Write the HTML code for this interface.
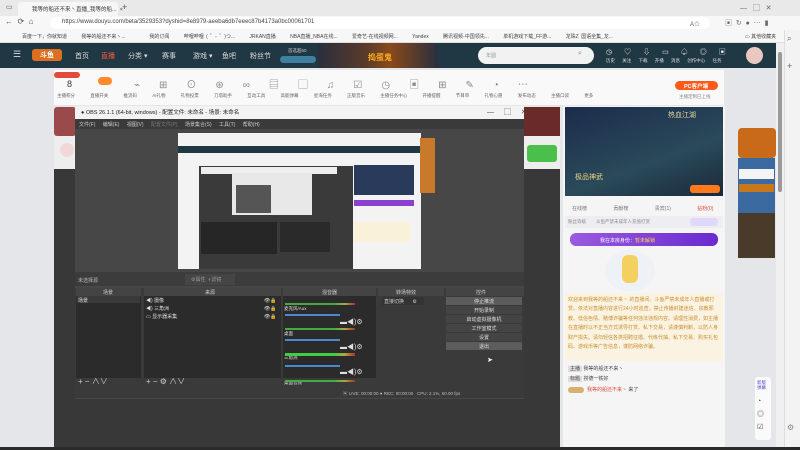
<!DOCTYPE html>
<html><head><meta charset="utf-8"><style>
*{margin:0;padding:0;box-sizing:border-box}
body{width:800px;height:450px;overflow:hidden;background:#e5e6ea;font-family:"Liberation Sans","Noto Sans CJK SC",sans-serif;font-size:6px;color:#333;position:relative}
.a{position:absolute}
.t{white-space:nowrap}
</style></head><body>
<!-- tab bar -->
<div class="a" style="left:0;top:0;width:800px;height:16px;background:#e9e9e9"></div>
<div class="a" style="left:18px;top:2px;width:100px;height:14px;background:#f7f7f7;border-radius:4px 4px 0 0"></div>
<div class="a t" style="left:32px;top:5px;font-size:5.5px">我等的船还不来丶直播_我等的船...&nbsp;&nbsp;×</div>
<div class="a t" style="left:122px;top:2px;font-size:9px;color:#555">+</div>
<div class="a t" style="left:6px;top:3px;font-size:7px;color:#555">▭</div>
<div class="a t" style="left:740px;top:3px;font-size:7px;color:#666">—&nbsp;&nbsp;&nbsp;▢&nbsp;&nbsp;&nbsp;✕</div>
<!-- address bar -->
<div class="a" style="left:0;top:16px;width:800px;height:14px;background:#f7f7f7"></div>
<div class="a t" style="left:5px;top:17px;font-size:8px;color:#555">←&nbsp;&nbsp;⟳&nbsp;&nbsp;⌂</div>
<div class="a" style="left:50px;top:17px;width:660px;height:12px;background:#fff;border-radius:6px"></div>
<div class="a t" style="left:62px;top:19px;font-size:6px;color:#444">https://www.douyu.com/beta/3529353?dyshid=8e8979-aeeba6db7eeec87b4173a0bc00061701</div>
<div class="a t" style="left:690px;top:19px;font-size:6px;color:#666">A☆</div>
<div class="a t" style="left:725px;top:18px;font-size:7px;color:#666">▣&nbsp;&nbsp;↻&nbsp;&nbsp;●&nbsp;&nbsp;⋯&nbsp;&nbsp;▮</div>
<!-- bookmarks -->
<div class="a" style="left:0;top:30px;width:800px;height:13px;background:#f7f7f7;border-bottom:1px solid #ddd"></div>
<div class="a t" style="left:22px;top:33px;font-size:5px;color:#444;word-spacing:1px">百度一下，你就知道&nbsp;&nbsp;&nbsp;&nbsp;&nbsp;&nbsp;我等的船还不来丶...&nbsp;&nbsp;&nbsp;&nbsp;&nbsp;&nbsp;&nbsp;&nbsp;&nbsp;&nbsp;我的订阅&nbsp;&nbsp;&nbsp;&nbsp;&nbsp;&nbsp;哔哩哔哩 ( ゜- ゜)つ...&nbsp;&nbsp;&nbsp;&nbsp;&nbsp;&nbsp;JRKAN直播&nbsp;&nbsp;&nbsp;&nbsp;&nbsp;&nbsp;NBA直播_NBA在线...&nbsp;&nbsp;&nbsp;&nbsp;&nbsp;&nbsp;爱奇艺-在线视频网...&nbsp;&nbsp;&nbsp;&nbsp;&nbsp;&nbsp;Yandex&nbsp;&nbsp;&nbsp;&nbsp;&nbsp;&nbsp;腾讯视频-中国领先...&nbsp;&nbsp;&nbsp;&nbsp;&nbsp;&nbsp;单机游戏下载_FF游...&nbsp;&nbsp;&nbsp;&nbsp;&nbsp;&nbsp;龙珠Z 国语全集_龙...</div>
<div class="a t" style="left:745px;top:33px;font-size:5px;color:#444">▭ 其他收藏夹</div>
<!-- right browser sidebar -->
<div class="a" style="left:784px;top:30px;width:16px;height:418px;background:#f3f3f3;border-left:1px solid #ddd"></div>
<div class="a t" style="left:787px;top:34px;font-size:8px;color:#666">⌕</div>
<div class="a t" style="left:787px;top:61px;font-size:9px;color:#666">+</div>
<div class="a t" style="left:787px;top:423px;font-size:8px;color:#888">⚙</div>
<!-- scrollbar -->
<div class="a" style="left:776px;top:43px;width:8px;height:405px;background:#f0f0f0"></div>
<div class="a" style="left:778px;top:52px;width:4px;height:140px;background:#9a9a9a;border-radius:2px"></div>
<!-- douyu header -->
<div class="a" style="left:0;top:43px;width:776px;height:25px;background:#203844"></div>
<div class="a t" style="left:13px;top:49px;font-size:9px;color:#ddd">☰</div>
<div class="a" style="left:32px;top:49px;width:30px;height:12px;background:#ff7a1a;border-radius:3px;opacity:.85"></div>
<div class="a t" style="left:40px;top:50px;font-size:7px;color:#fff;font-weight:bold">斗鱼</div>
<div class="a t" style="left:75px;top:51px;font-size:7px;color:#ddd">首页</div>
<div class="a t" style="left:101px;top:51px;font-size:7px;color:#ff5a3c">直播</div>
<div class="a t" style="left:128px;top:51px;font-size:7px;color:#ddd">分类 ▾</div>
<div class="a t" style="left:162px;top:51px;font-size:7px;color:#ddd">赛事</div>
<div class="a t" style="left:193px;top:51px;font-size:7px;color:#ddd">游戏 ▾</div>
<div class="a t" style="left:222px;top:51px;font-size:7px;color:#ddd">鱼吧</div>
<div class="a t" style="left:250px;top:51px;font-size:7px;color:#ddd">粉丝节</div>
<div class="a t" style="left:288px;top:48px;font-size:4.5px;color:#ccc">首选超60</div>
<div class="a" style="left:280px;top:56px;width:36px;height:7px;background:#3f7fa0;border-radius:4px"></div>
<div class="a" style="left:318px;top:43px;width:120px;height:25px;background:linear-gradient(90deg,#2a2f3e,#5a3a2a 40%,#8a4a1a 60%,#2a2f3e)"></div>
<div class="a t" style="left:368px;top:52px;font-size:8px;color:#ffb020;font-weight:bold">捣蛋鬼</div>
<div class="a" style="left:478px;top:47px;width:116px;height:17px;background:#f2f2f2;border-radius:9px"></div>
<div class="a t" style="left:486px;top:52px;font-size:5px;color:#999">年圆</div>
<div class="a t" style="left:578px;top:50px;font-size:7px;color:#888">⌕</div>
<div class="a t" style="left:606px;top:47px;font-size:7px;color:#eee;letter-spacing:12px">◷♡⇩▭♤◎▣</div>
<div class="a t" style="left:606px;top:58px;font-size:4.5px;color:#ddd;word-spacing:6px">历史 关注 下载 开播 消息 创作中心 任务</div>
<div class="a" style="left:746px;top:47px;width:17px;height:17px;background:#e8c8c0;border-radius:50%"></div>
<!-- toolbar -->
<div class="a" style="left:54px;top:70px;width:670px;height:35px;background:#f9f9f9"></div>
<div class="a" style="left:54px;top:72px;width:26px;height:6px;background:#e24a3a;border-radius:3px"></div>
<div class="a t" style="left:67px;top:79px;font-size:9px;color:#333">8</div>
<div class="a" style="left:98px;top:77px;width:14px;height:8px;background:#ff8a2a;border-radius:4px"></div>
<div class="a t" style="left:57px;top:93px;font-size:4.5px;color:#666;word-spacing:14px">主播积分 直播开关 推流码 AI礼物 礼物投票 刀塔助手 互动工具 高能弹幕 星海任务 正版音乐 主播任务中心 开播提醒 节目单 礼物心愿 发布动态 主播口袋 更多</div>
<div class="a t" style="left:134px;top:76px;font-size:10px;color:#888;letter-spacing:19px">⌁⊞⊙⊛∞▤▢♫☑◷▣⊞✎◔⋯</div>
<div class="a" style="left:675px;top:81px;width:43px;height:9px;background:#ff5a1a;border-radius:5px"></div>
<div class="a t" style="left:684px;top:82px;font-size:5.5px;color:#fff;font-weight:bold">PC客户端</div>
<div class="a t" style="left:679px;top:94px;font-size:4.5px;color:#888">主播定制已上线</div>
<!-- main dark video area -->
<div class="a" style="left:54px;top:107px;width:506px;height:340px;background:#383838"></div>
<div class="a" style="left:54px;top:107px;width:506px;height:62px;background:#eee"></div>
<div class="a" style="left:54px;top:107px;width:22px;height:29px;background:#9a4a4a;border-radius:3px"></div>
<div class="a" style="left:60px;top:143px;width:14px;height:14px;background:#f0d8d8;border-radius:50%"></div>
<div class="a" style="left:524px;top:107px;width:36px;height:29px;background:#6a2a2a"></div>
<div class="a" style="left:527px;top:145px;width:30px;height:17px;background:#4ac04a;border-radius:3px"></div>
<!-- OBS window -->
<div class="a" style="left:75px;top:106px;width:449px;height:293px;background:#474747"></div>
<div class="a" style="left:75px;top:106px;width:449px;height:13px;background:#f3f3f3"></div>
<div class="a t" style="left:81px;top:108px;font-size:5.5px;color:#222">● OBS 26.1.1 (64-bit, windows) - 配置文件: 未命名 - 场景: 未命名</div>
<div class="a t" style="left:487px;top:107px;font-size:7px;color:#444;word-spacing:8px">— ▢ ✕</div>
<div class="a" style="left:75px;top:119px;width:449px;height:10px;background:#3a3a3a"></div>
<div class="a t" style="left:79px;top:121px;font-size:5px;color:#ccc;word-spacing:6px">文件(F) 编辑(E) 视图(V) <span style="color:#777">配置文件(P)</span> 场景集合(S) 工具(T) 帮助(H)</div>
<!-- preview -->
<div class="a" style="left:178px;top:133px;width:243px;height:136px;background:#f3f3f3"></div>
<div class="a" style="left:178px;top:146px;width:243px;height:7px;background:#203844"></div>
<div class="a" style="left:199px;top:166px;width:154px;height:103px;background:#3a3a3a"></div>
<div class="a" style="left:201px;top:167px;width:136px;height:7px;background:#eee"></div>
<div class="a" style="left:232px;top:173px;width:80px;height:42px;background:#e8e8e8"></div>
<div class="a" style="left:236px;top:185px;width:35px;height:28px;background:#555"></div>
<div class="a" style="left:201px;top:222px;width:76px;height:32px;background:#262626"></div>
<div class="a" style="left:280px;top:222px;width:50px;height:30px;background:#2a2a2a"></div>
<div class="a" style="left:354px;top:165px;width:60px;height:30px;background:#2a3a5a"></div>
<div class="a" style="left:354px;top:200px;width:60px;height:6px;background:#8a40d0"></div>
<div class="a" style="left:354px;top:222px;width:56px;height:20px;background:#f9f1d8"></div>
<div class="a" style="left:420px;top:138px;width:15px;height:55px;background:#c87a2a"></div>
<!-- sources toolbar -->
<div class="a" style="left:75px;top:272px;width:449px;height:14px;background:#3c3c3c"></div>
<div class="a t" style="left:78px;top:277px;font-size:5px;color:#bbb">未选择源</div>
<div class="a" style="left:185px;top:274px;width:50px;height:11px;background:#454545"></div>
<div class="a t" style="left:191px;top:276px;font-size:5px;color:#999">⚙属性&nbsp;&nbsp;◐滤镜</div>
<!-- docks -->
<div class="a" style="left:75px;top:288px;width:449px;height:110px;background:#3a3a3a"></div>
<div class="a" style="left:76px;top:288px;width:65px;height:90px;background:#2b2b2b"></div>
<div class="a" style="left:144px;top:288px;width:137px;height:90px;background:#2b2b2b"></div>
<div class="a" style="left:283px;top:288px;width:93px;height:90px;background:#2b2b2b"></div>
<div class="a" style="left:76px;top:288px;width:65px;height:8px;background:#444"></div>
<div class="a" style="left:144px;top:288px;width:137px;height:8px;background:#444"></div>
<div class="a" style="left:283px;top:288px;width:93px;height:8px;background:#444"></div>
<div class="a" style="left:378px;top:288px;width:66px;height:8px;background:#444"></div>
<div class="a" style="left:446px;top:288px;width:78px;height:8px;background:#444"></div>
<div class="a t" style="left:103px;top:289px;font-size:5px;color:#ccc">场景</div>
<div class="a t" style="left:205px;top:289px;font-size:5px;color:#ccc">来源</div>
<div class="a t" style="left:322px;top:289px;font-size:5px;color:#ccc">混音器</div>
<div class="a t" style="left:396px;top:289px;font-size:5px;color:#ccc">转场特效</div>
<div class="a t" style="left:476px;top:289px;font-size:5px;color:#ccc">控件</div>
<div class="a" style="left:77px;top:296px;width:63px;height:7px;background:#3a3a3a"></div>
<div class="a t" style="left:78px;top:297px;font-size:5px;color:#ddd">场景</div>
<div class="a t" style="left:146px;top:297px;font-size:5px;color:#ddd;line-height:8px">◀) 摄像<br>◀) 三角洲<br>▭ 显示器采集</div>
<div class="a t" style="left:264px;top:297px;font-size:5px;color:#ddd;line-height:8px">👁🔒<br>👁🔒<br>👁🔒</div>
<div class="a t" style="left:284px;top:297px;font-size:4.5px;color:#ddd;line-height:24.5px">麦克风/Aux<br>桌面<br>三角洲<br>桌面音频</div>
<div class="a" style="left:285px;top:303px;width:70px;height:2px;background:linear-gradient(90deg,#4a4 0,#4a4 70%,#aa4 85%,#a33)"></div>
<div class="a" style="left:285px;top:328px;width:70px;height:2px;background:linear-gradient(90deg,#4a4 0,#4a4 70%,#aa4 85%,#a33)"></div>
<div class="a" style="left:285px;top:353px;width:70px;height:3px;background:linear-gradient(90deg,#4c4 0,#4c4 70%,#aa4 85%,#a33)"></div>
<div class="a" style="left:285px;top:380px;width:70px;height:2px;background:linear-gradient(90deg,#4a4 0,#4a4 70%,#aa4 85%,#a33)"></div>
<div class="a" style="left:285px;top:314px;width:55px;height:2px;background:#4a8ac8"></div>
<div class="a" style="left:285px;top:339px;width:55px;height:2px;background:#4a8ac8"></div>
<div class="a" style="left:285px;top:365px;width:55px;height:2px;background:#4a8ac8"></div>
<div class="a t" style="left:340px;top:310px;font-size:7px;color:#ddd;line-height:25px">▬◀)⚙<br>▬◀)⚙<br>▬◀)⚙</div>
<div class="a" style="left:382px;top:297px;width:42px;height:8px;background:#333"></div>
<div class="a t" style="left:384px;top:298px;font-size:5px;color:#ccc">直接切换&nbsp;&nbsp;&nbsp;&nbsp;&nbsp;&nbsp;⚙</div>
<div class="a" style="left:446px;top:297px;width:76px;height:8px;background:#5c5c5c"></div>
<div class="a" style="left:446px;top:306px;width:76px;height:8px;background:#444"></div>
<div class="a" style="left:446px;top:315px;width:76px;height:8px;background:#444"></div>
<div class="a" style="left:446px;top:324px;width:76px;height:8px;background:#444"></div>
<div class="a" style="left:446px;top:333px;width:76px;height:8px;background:#444"></div>
<div class="a" style="left:446px;top:342px;width:76px;height:8px;background:#5c5c5c"></div>
<div class="a t" style="left:446px;top:298px;width:76px;text-align:center;font-size:5px;color:#ddd;line-height:9px">停止推流<br>开始录制<br>启动虚拟摄像机<br>工作室模式<br>设置<br>退出</div>
<div class="a t" style="left:487px;top:356px;font-size:7px;color:#fff">➤</div>
<div class="a t" style="left:78px;top:376px;font-size:8px;color:#ccc">+ − ∧∨</div>
<div class="a t" style="left:146px;top:376px;font-size:8px;color:#ccc">+ − ⚙ ∧∨</div>
<div class="a t" style="left:343px;top:391px;font-size:4.5px;color:#bbb">▣ LIVE: 00:00:00 ● REC: 00:00:00 &nbsp;&nbsp;CPU: 2.1%, 60.00 fps</div>
<!-- right panel -->
<div class="a" style="left:563px;top:106px;width:162px;height:342px;background:#f5f5f5"></div>
<div class="a" style="left:565px;top:107px;width:158px;height:89px;background:linear-gradient(160deg,#1c2c4c,#2a4a5a 60%,#1a2a3a)"></div>
<div class="a t" style="left:668px;top:110px;font-size:7px;color:#e8d8a0">热血江湖</div>
<div class="a t" style="left:575px;top:172px;font-size:7px;color:#f0d080">极品神武</div>
<div class="a" style="left:690px;top:185px;width:30px;height:8px;background:#ff7a1a;border-radius:3px"></div>
<div class="a t" style="left:572px;top:205px;font-size:5px;color:#777;word-spacing:25px">在线榜 贡献榜 贵宾(1) <span style="color:#e04a3a">钻粉(0)</span></div>
<div class="a" style="left:565px;top:216px;width:158px;height:12px;background:#eeeef2"></div>
<div class="a t" style="left:568px;top:219px;font-size:4.5px;color:#888">粉丝等级 &nbsp;&nbsp;&nbsp;&nbsp;&nbsp;&nbsp;&nbsp;斗鱼严禁未成年人充值打赏</div>
<div class="a" style="left:690px;top:218px;width:28px;height:8px;background:#e0d8f8;border-radius:4px"></div>
<div class="a" style="left:570px;top:233px;width:148px;height:13px;background:linear-gradient(90deg,#9a5ae0,#6a2ad0);border-radius:6px"></div>
<div class="a t" style="left:600px;top:237px;font-size:5px;color:#fff">我在本房身份：<span style="color:#ffd84a">暂未解锁</span></div>
<div class="a" style="left:605px;top:250px;width:50px;height:42px;background:#eef2f6;border-radius:50%"></div>
<div class="a" style="left:622px;top:255px;width:16px;height:28px;background:#f4d060;border-radius:6px"></div>
<div class="a" style="left:565px;top:293px;width:158px;height:68px;background:#fbf3e2"></div>
<div class="a" style="left:568px;top:296px;width:152px;font-size:5px;line-height:9.4px;color:#c89030">欢迎来到我等的船还不来丶 的直播间。斗鱼严禁未成年人直播或打赏。依法对直播内容进行24小时巡查，禁止传播封建迷信、宗教邪教、低俗色情、赌博诈骗等任何违法违规内容。请理性消费，如主播在直播时以不正当方式诱导打赏、私下交易，请谨慎判断，以防人身财产损失。请勿轻信各类招聘征婚、代练代抽、私下交易、购买礼包码、游戏币等广告信息，谨防网络诈骗。</div>
<div class="a t" style="left:568px;top:364px;font-size:5px;color:#444;line-height:10px"><span style="background:#ddd;padding:0 2px">主播</span> 我等的船还不来丶<br><span style="background:#ddd;padding:0 2px">标题</span> 捞德一铁好</div>
<div class="a" style="left:568px;top:387px;width:16px;height:6px;background:#d8b070;border-radius:3px"></div>
<div class="a t" style="left:587px;top:386px;font-size:5px;color:#e04a3a">我等的船还不来丶 <span style="color:#444">来了</span></div>
<!-- right ads -->
<div class="a" style="left:738px;top:128px;width:38px;height:30px;background:#c86a1a;border-radius:4px"></div>
<div class="a" style="left:738px;top:158px;width:37px;height:100px;background:#3a6aa0"></div>
<div class="a" style="left:739px;top:169px;width:35px;height:10px;background:#f4f4f4"></div>
<div class="a" style="left:739px;top:184px;width:35px;height:8px;background:#c8781a"></div>
<div class="a" style="left:738px;top:213px;width:37px;height:45px;background:#4a3a2a"></div>
<div class="a" style="left:755px;top:377px;width:16px;height:63px;background:#fafafa;border-radius:3px"></div>
<div class="a t" style="left:757px;top:380px;font-size:4.5px;color:#5a4ad0;line-height:5px">新版<br>弹幕</div>
<div class="a t" style="left:757px;top:395px;font-size:7px;color:#555;line-height:13px">◔<br>◎<br>☑</div>
<!-- bottom taskbar -->
<div class="a" style="left:0;top:447px;width:800px;height:3px;background:#2a2a2a"></div>
</body></html>
